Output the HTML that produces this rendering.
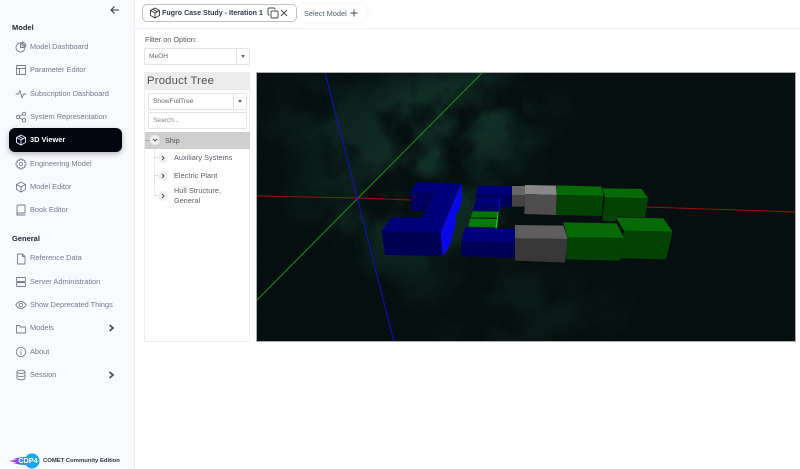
<!DOCTYPE html>
<html><head><meta charset="utf-8"><style>
*{box-sizing:border-box}
html,body{margin:0;padding:0;width:800px;height:469px;overflow:hidden;background:#fff;font-family:"Liberation Sans",sans-serif}
.a{position:absolute;white-space:nowrap}
#side{position:absolute;left:0;top:0;width:135px;height:469px;background:#f8fafd;border-right:1px solid #eef0f3}
.h{font-size:7.5px;font-weight:bold;color:#1f2530;left:12px;line-height:11px}
.n{font-size:7.4px;color:#727b8c;left:30px;line-height:12px}
.i{position:absolute;left:15px;width:12px;height:12px;fill:none;stroke:#747d8c;stroke-width:.9;stroke-linecap:round;stroke-linejoin:round}
.box{position:absolute;background:#fff;border:1px solid #e2e4e8;border-radius:2px;font-size:6.6px;color:#666;line-height:15px;padding-left:4px}
.sel{position:absolute;top:0;right:0;bottom:0;width:13px;border-left:1px solid #e2e4e8}
.sel:after{content:"";position:absolute;left:4px;top:6px;border:2.5px solid transparent;border-top:3px solid #666;border-bottom:0}
.t{font-size:7.2px;color:#555c66;left:174px;line-height:10px;letter-spacing:.1px}
.c{position:absolute;width:10px;height:10px;border-radius:50%;background:#eeeeee;left:158px}
.c svg{position:absolute;left:0;top:0;width:10px;height:10px;fill:none;stroke:#555;stroke-width:1}
</style></head><body>
<div id="side"></div>
<svg class="a" style="left:109px;top:4px;width:12px;height:12px;fill:none;stroke:#333;stroke-width:1" viewBox="0 0 12 12"><path d="M10 6H2M5.500 2.500L2 6l3.500 3.500"/></svg>
<div class="a h" style="top:22px">Model</div>

<svg class="i" style="top:41px" viewBox="0 0 12 12"><circle cx="5.500" cy="6.500" r="4.500"/><path d="M5.500 2v4.500H10"/><path d="M7 1a4.500 4.500 0 0 1 4 4H7z"/></svg>
<div class="a n" style="top:41px">Model Dashboard</div>
<svg class="i" style="top:64px" viewBox="0 0 12 12"><rect x="1.500" y="1.500" width="9" height="9"/><path d="M1.500 4.500h9M4.500 4.500v6"/></svg>
<div class="a n" style="top:64px">Parameter Editor</div>
<svg class="i" style="top:88px" viewBox="0 0 12 12"><path d="M1 6h2.500L5 2.500 7 10l1.500-4H11"/></svg>
<div class="a n" style="top:88px">Subscription Dashboard</div>
<svg class="i" style="top:111px" viewBox="0 0 12 12"><circle cx="3" cy="6" r="1.600"/><circle cx="9" cy="2.800" r="1.600"/><circle cx="9" cy="9.200" r="1.600"/><path d="M4.400 5.200l3.200-1.600M4.400 6.800l3.200 1.600"/></svg>
<div class="a n" style="top:111px">System Representation</div>

<div class="a" style="left:9px;top:128px;width:113px;height:24px;background:#03050f;border-radius:6px;box-shadow:0 2px 6px rgba(0,0,0,.28)"></div>
<svg class="i" style="top:134px;stroke:#eef" viewBox="0 0 12 12"><path d="M6 1l4.500 2.500v5L6 11 1.500 8.500v-5z"/><path d="M1.500 3.500L6 6l4.500-2.500M6 6v5M3.700 2.200l4.600 2.600"/></svg>
<div class="a n" style="top:134px;color:#fff;font-weight:bold">3D Viewer</div>

<svg class="i" style="top:158px" viewBox="0 0 12 12"><circle cx="6" cy="6" r="1.700"/><path d="M5 1h2l.4 1.400 1.300-.6 1.400 1.400-.6 1.300L11 5v2l-1.500.4.6 1.300-1.400 1.400-1.300-.6L7 11H5l-.4-1.500-1.300.6-1.400-1.400.6-1.300L1 7V5l1.500-.4-.6-1.300 1.400-1.400 1.300.6z"/></svg>
<div class="a n" style="top:158px">Engineering Model</div>
<svg class="i" style="top:181px" viewBox="0 0 12 12"><path d="M6 1l4.500 2.500v5L6 11 1.500 8.500v-5z"/><path d="M1.500 3.500L6 6l4.500-2.500M6 6v5"/></svg>
<div class="a n" style="top:181px">Model Editor</div>
<svg class="i" style="top:204px" viewBox="0 0 12 12"><path d="M2 10V2.500A1.500 1.500 0 0 1 3.500 1H10v8H3.500A1.500 1.500 0 0 0 2 10.500 .5.5 0 0 0 3 11h7"/></svg>
<div class="a n" style="top:204px">Book Editor</div>

<div class="a h" style="top:233px">General</div>
<svg class="i" style="top:253px" viewBox="0 0 12 12"><path d="M2.500 1H7.500L10 3.500V11H2.500zM7.500 1v2.500H10"/></svg>
<div class="a n" style="top:252px">Reference Data</div>
<svg class="i" style="top:276px" viewBox="0 0 12 12"><rect x="1.500" y="1.500" width="9" height="4" rx=".6"/><rect x="1.500" y="6.500" width="9" height="4" rx=".6"/></svg>
<div class="a n" style="top:276px">Server Administration</div>
<svg class="i" style="top:299px" viewBox="0 0 12 12"><path d="M.8 6S2.800 2.500 6 2.500 11.200 6 11.200 6 9.200 9.500 6 9.500.8 6 .8 6z"/><circle cx="6" cy="6" r="1.700"/></svg>
<div class="a n" style="top:299px">Show Deprecated Things</div>
<svg class="i" style="top:323px" viewBox="0 0 12 12"><path d="M1.500 2.500h3l1 1.500h5v6h-9z"/></svg>
<div class="a n" style="top:322px">Models</div>
<svg class="a" style="left:108px;top:324px;width:7px;height:8px" viewBox="0 0 7 8"><path d="M1.500 1L5 4 1.500 7" fill="none" stroke="#4a5160" stroke-width="1.800"/></svg>
<svg class="i" style="top:346px" viewBox="0 0 12 12"><circle cx="6" cy="6" r="4.700"/><path d="M6 5.500V8.500M6 3.600v.3"/></svg>
<div class="a n" style="top:346px">About</div>
<svg class="i" style="top:369px" viewBox="0 0 12 12"><ellipse cx="6" cy="2.800" rx="4" ry="1.600"/><path d="M2 2.800v6.400c0 .9 1.800 1.600 4 1.600s4-.7 4-1.600V2.800M2 6c0 .9 1.800 1.600 4 1.600s4-.7 4-1.600"/></svg>
<div class="a n" style="top:369px">Session</div>
<svg class="a" style="left:108px;top:371px;width:7px;height:8px" viewBox="0 0 7 8"><path d="M1.500 1L5 4 1.500 7" fill="none" stroke="#4a5160" stroke-width="1.800"/></svg>

<svg class="a" style="left:8px;top:453px;width:32px;height:16px" viewBox="0 0 32 16"><path d="M1 8L14 5.500V10.500z" fill="#9a3ff0"/><path d="M5 6L14 4V7zM5 10L14 12V9z" fill="#5f4ff5"/><circle cx="24" cy="8" r="7.500" fill="#19a7f2"/><rect x="11" y="4" width="12" height="8" rx="4" fill="#3d8ff5"/></svg>
<div class="a" style="left:17px;top:453px;width:22px;text-align:center;font-size:7.300px;font-weight:bold;color:#fff;line-height:16px">CDP4</div>
<div class="a" style="left:43px;top:456px;font-size:5.900px;font-weight:bold;color:#2e3440;line-height:10px">COMET Community Edition</div>

<div class="a" style="left:135px;top:28px;width:665px;height:1px;background:#f0f1f3"></div>
<div class="a" style="left:142px;top:4px;width:155px;height:18px;border:1px solid #bfc3c9;border-radius:5px;background:#fff"></div>
<svg class="i" style="left:149px;top:7px;stroke:#333" viewBox="0 0 12 12"><path d="M6 1l4.500 2.500v5L6 11 1.500 8.500v-5z"/><path d="M1.500 3.500L6 6l4.500-2.500M6 6v5M3.700 2.200l4.600 2.600"/></svg>
<div class="a" style="left:162px;top:8px;font-size:7.100px;font-weight:bold;color:#303a4a;line-height:11px">Fugro Case Study - Iteration 1</div>
<svg class="a" style="left:267px;top:7px;width:12px;height:12px;fill:none;stroke:#444;stroke-width:.9" viewBox="0 0 12 12"><rect x="4" y="4" width="7" height="7" rx="1"/><path d="M2.500 8H2a1 1 0 0 1-1-1V2a1 1 0 0 1 1-1h5a1 1 0 0 1 1 1v.5"/></svg>
<svg class="a" style="left:279px;top:8px;width:10px;height:10px;fill:none;stroke:#444;stroke-width:.9" viewBox="0 0 10 10"><path d="M2 2l6 6M8 2l-6 6"/></svg>
<div class="a" style="left:299px;top:4px;width:68px;height:18px;background:#fff;border-radius:4px;box-shadow:0 0 3px rgba(0,0,0,.06)"></div>
<div class="a" style="left:304px;top:8px;font-size:7.400px;color:#4d6172;line-height:11px">Select Model</div>
<svg class="a" style="left:349px;top:8px;width:10px;height:10px;fill:none;stroke:#444;stroke-width:.9" viewBox="0 0 10 10"><path d="M5 1.500v7M1.500 5h7"/></svg>

<div class="a" style="left:145px;top:35px;font-size:7.300px;color:#555;line-height:10px">Filter on Option:</div>
<div class="box" style="left:144px;top:48px;width:106px;height:17px">MeOH<div class="sel"></div></div>

<div class="a" style="left:144px;top:72px;width:106px;height:270px;border:1px solid #eeeeee;border-top:0;background:#fff"></div>
<div class="a" style="left:145px;top:72px;width:105px;height:18px;background:#ececec;font-size:11.300px;color:#4d5156;line-height:19px;padding-left:2px;letter-spacing:.2px">Product Tree</div>
<div class="box" style="left:148px;top:93px;width:99px;height:17px">ShowFullTree<div class="sel"></div></div>
<div class="box" style="left:148px;top:112px;width:99px;height:17px;color:#888">Search...</div>
<div class="a" style="left:145px;top:132px;width:105px;height:17px;background:#cfcfcf"></div>
<div class="a" style="left:145px;top:140px;width:5px;height:1px;background:#aaa"></div>
<div class="a" style="left:154px;top:149px;width:1px;height:47px;background:#eaeaea"></div>
<div class="a" style="left:154px;top:157px;width:5px;height:1px;background:#ddd"></div>
<div class="a" style="left:154px;top:175px;width:5px;height:1px;background:#ddd"></div>
<div class="a" style="left:154px;top:195px;width:5px;height:1px;background:#ddd"></div>
<div class="c" style="left:150px;top:135px"><svg viewBox="0 0 10 10"><path d="M3 4l2 2 2-2"/></svg></div>
<div class="a t" style="left:165px;top:136px;color:#555">Ship</div>
<div class="c" style="top:153px"><svg viewBox="0 0 10 10"><path d="M4 3l2 2-2 2"/></svg></div>
<div class="a t" style="top:153px">Auxiliary Systems</div>
<div class="c" style="top:171px"><svg viewBox="0 0 10 10"><path d="M4 3l2 2-2 2"/></svg></div>
<div class="a t" style="top:171px">Electric Plant</div>
<div class="c" style="top:191px"><svg viewBox="0 0 10 10"><path d="M4 3l2 2-2 2"/></svg></div>
<div class="a t" style="top:186px">Hull Structure,</div>
<div class="a t" style="top:196px">General</div>

<svg class="a" style="left:0;top:0;width:800px;height:469px" viewBox="0 0 800 469">
<defs>
<clipPath id="v"><rect x="257" y="73" width="538" height="268"/></clipPath>
<radialGradient id="g1"><stop offset="0" stop-color="#fff" stop-opacity="1"/><stop offset=".55" stop-color="#fff" stop-opacity=".65"/><stop offset="1" stop-color="#fff" stop-opacity="0"/></radialGradient>
<mask id="m" maskUnits="userSpaceOnUse" x="257" y="73" width="538" height="268" color-interpolation="sRGB">
<rect x="257" y="73" width="538" height="268" fill="#000"/>
<ellipse cx="415" cy="180" rx="140" ry="130" fill="url(#g1)"/>
<ellipse cx="470" cy="110" rx="110" ry="55" fill="url(#g1)"/>
<ellipse cx="520" cy="310" rx="130" ry="50" fill="url(#g1)" opacity=".4"/>
<ellipse cx="310" cy="110" rx="70" ry="45" fill="url(#g1)" opacity=".4"/>
</mask>
<filter id="cl" x="0" y="0" width="100%" height="100%" color-interpolation-filters="sRGB"><feTurbulence type="fractalNoise" baseFrequency=".018" numOctaves="4" seed="9"/><feColorMatrix values="0 0 0 0 .07  0 0 0 0 .2  0 0 0 0 .16  3.500 0 0 0 -1.250"/></filter>
<filter id="s" x="0" y="0" width="100%" height="100%" color-interpolation-filters="sRGB"><feTurbulence type="fractalNoise" baseFrequency=".9" numOctaves="1" seed="4"/><feColorMatrix values="0 0 0 0 .6  0 0 0 0 .7  0 0 0 0 .65  4 0 0 0 -2.700"/></filter>
</defs>
<rect x="256" y="72" width="540" height="270" fill="#a9adad"/>
<g clip-path="url(#v)">
<rect x="257" y="73" width="538" height="268" fill="#060f0f"/>
<g mask="url(#m)"><rect x="257" y="73" width="538" height="268" filter="url(#cl)"/></g>
<rect x="257" y="73" width="538" height="268" filter="url(#s)" opacity=".3"/>
<path d="M257 196L358 198 411 200M476 202L482 202M646 207L795 212" stroke="#a00c0c" stroke-width="1" fill="none"/>
<path d="M257 300L483 72" stroke="#1f8c1f" stroke-width="1"/>
<path d="M325 72L394 342" stroke="#1111c8" stroke-width="1"/>
</g>
<g transform="translate(370 170) scale(.33333)">
<path d="M120 65L142 36 273 40 262 68 195 68z" fill="#00007c"/>
<path d="M120 65L195 68 160 125 125 122z" fill="#000060"/>
<path d="M195 68L262 68 212 187 35 183 65 142 155 142z" fill="#00007c"/>
<path d="M35 183L212 187 218 258 45 255z" fill="#000058"/>
<path d="M212 187L262 68 275 40 275 95 265 128 258 130 255 170 240 225 232 240 218 258z" fill="#0808e6"/>
<path d="M318 73L325 47 428 48 428 75z" fill="#00007c"/>
<path d="M318 73L428 75 428 110 390 110 390 82 318 85z" fill="#00005c"/>
<path d="M318 85L390 82 388 100 315 100z" fill="#00007c"/>
<path d="M315 100L388 100 386 125 308 122z" fill="#00006a"/>
<path d="M388 82L391 82 388 125 386 125z" fill="#0a0ae0"/>
<path d="M308 124L384 125 382 143 302 142z" fill="#077607"/>
<path d="M300 146L381 147 379 172 295 170z" fill="#067a06"/>
<path d="M384 125L386 125 381 175 376 175z" fill="#0fd00f"/>
<path d="M285 172L435 177 435 217 273 213z" fill="#00007c"/>
<path d="M273 213L435 217 433 263 274 258z" fill="#00005a"/>
<path d="M426 48H465V76H426z" fill="#666"/>
<path d="M426 76H465L463 110 426 110z" fill="#444"/>
<path d="M465 45L558 47 560 75 465 72z" fill="#888"/>
<path d="M465 72L560 75 558 135 463 132z" fill="#4d4d4d"/>
<path d="M560 46L695 50 700 78 560 75z" fill="#066a06"/>
<path d="M560 75L700 78 695 138 558 135z" fill="#034203"/>
<path d="M697 55L815 57 835 85 705 82z" fill="#066a06"/>
<path d="M705 82L835 85 825 142 740 140 735 155 697 152z" fill="#034203"/>
<path d="M435 165L580 167 593 207 435 205z" fill="#5e5e5e"/>
<path d="M435 205L593 207 585 278 435 272z" fill="#383838"/>
<path d="M738 142L880 145 908 185 762 182z" fill="#066a06"/>
<path d="M762 182L908 185 888 268 752 265z" fill="#034203"/>
<path d="M580 157L740 160 762 204 592 202z" fill="#066a06"/>
<path d="M592 202L762 204 750 272 588 268z" fill="#034203"/>
</g>
</svg>
</body></html>
